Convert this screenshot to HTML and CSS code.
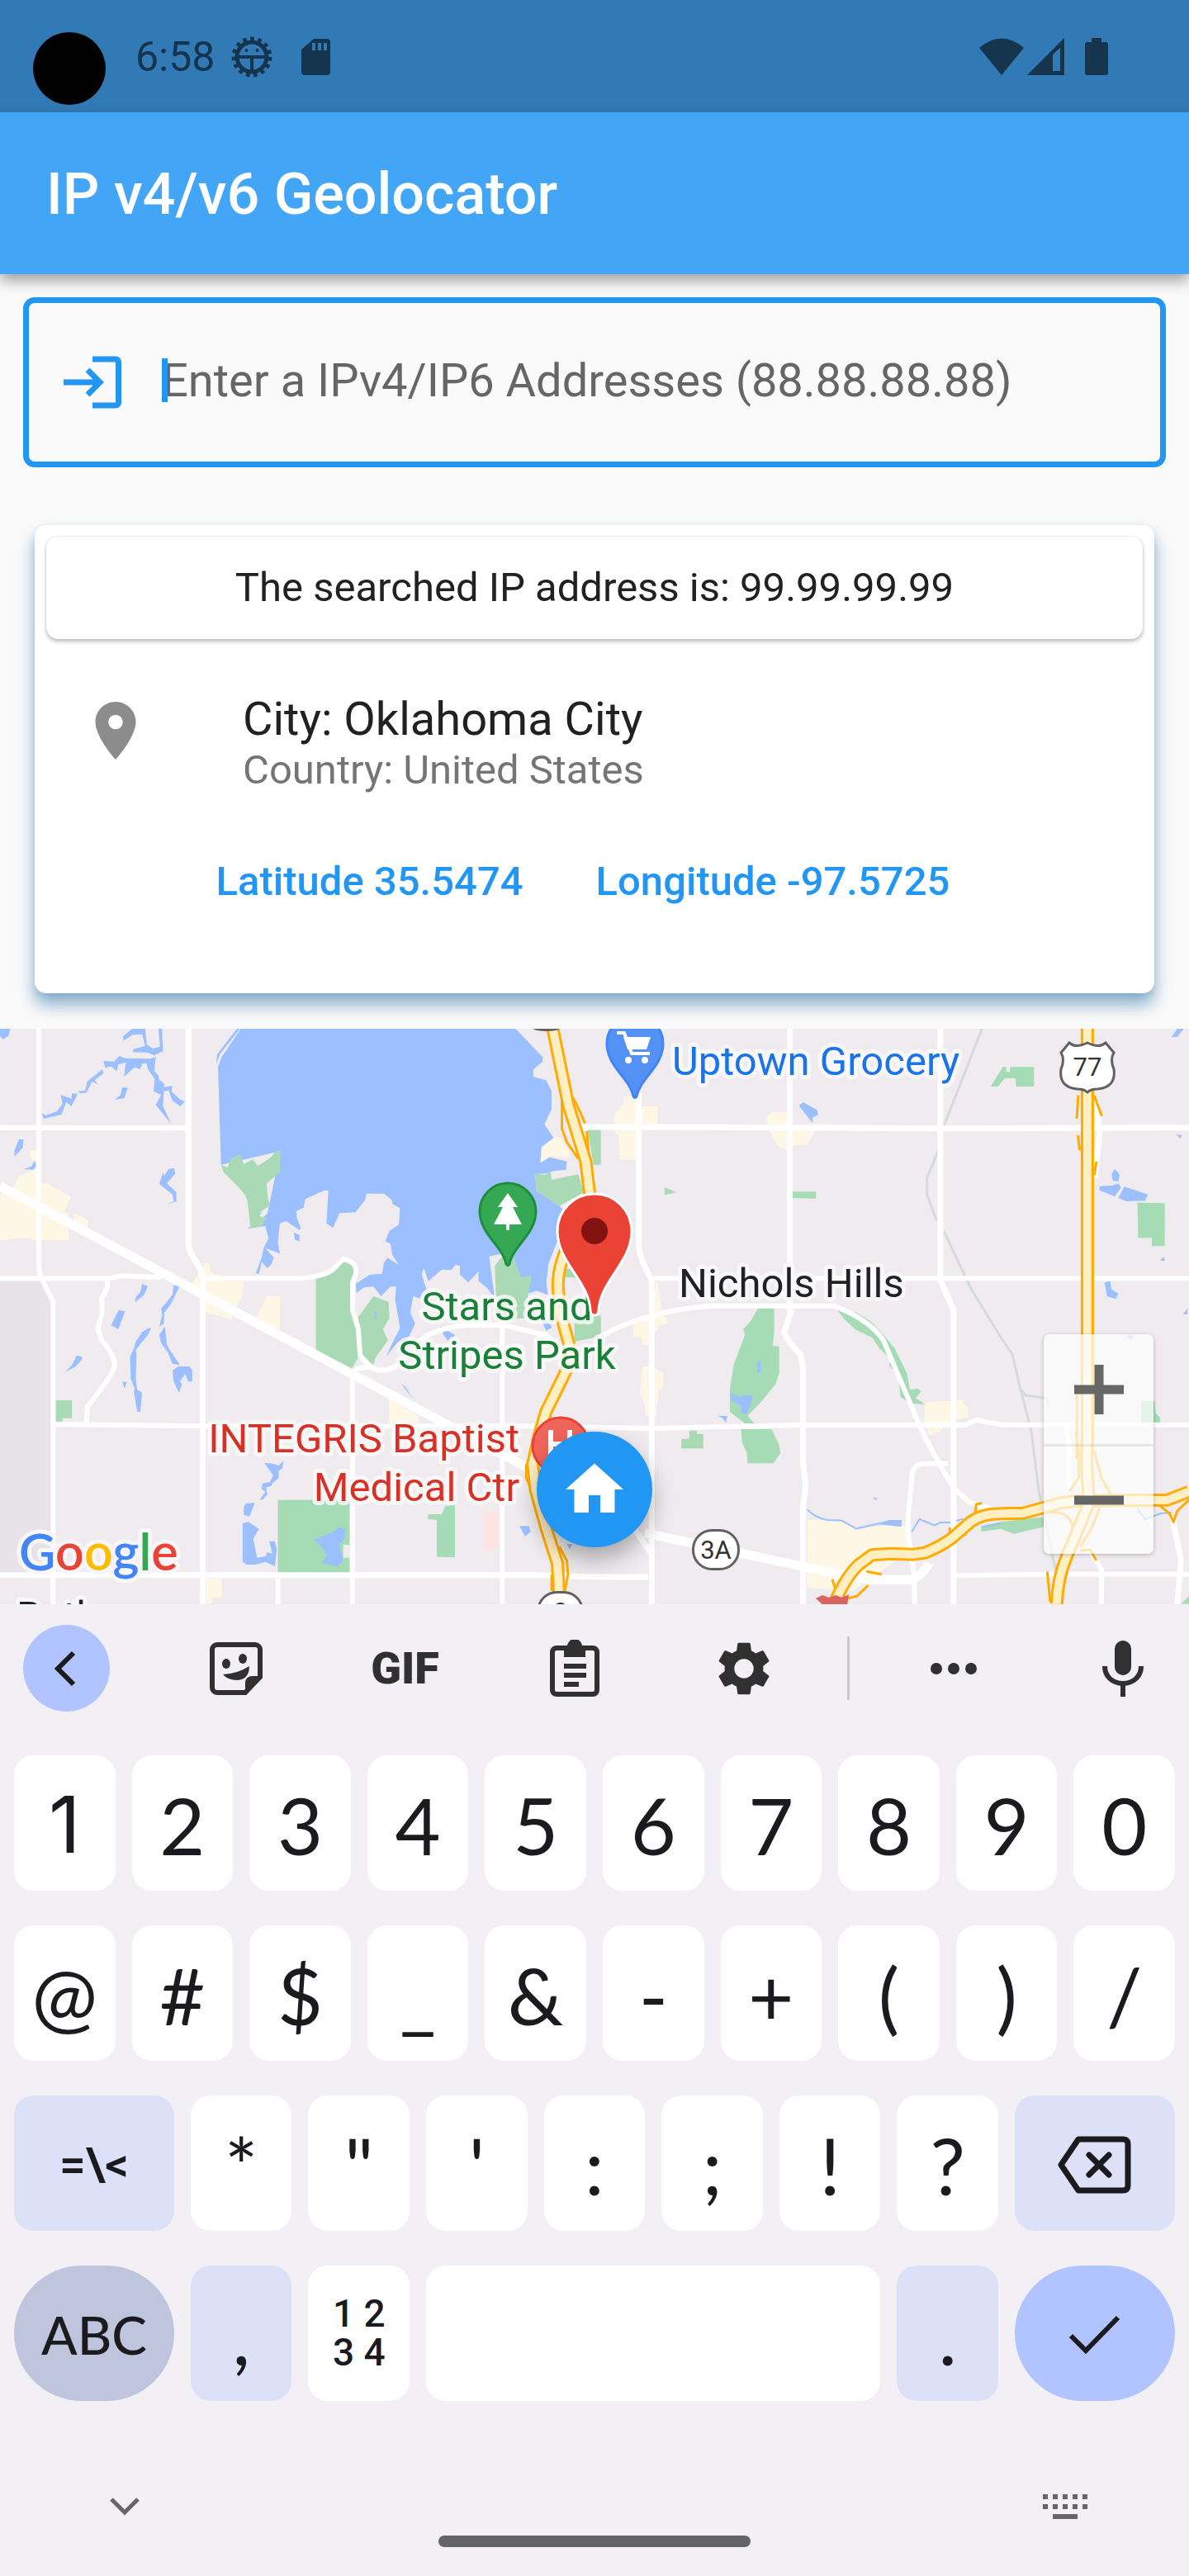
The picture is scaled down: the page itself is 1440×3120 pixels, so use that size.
FILE: index.html
```html
<!DOCTYPE html>
<html lang="en">
<head>
<meta charset="utf-8">
<meta name="viewport" content="width=device-width, initial-scale=1">
<title>IP v4/v6 Geolocator</title>
<link rel="stylesheet" href="styles.css">
</head>
<body>
<div class="screen">
  <div class="status">
    <span class="camera"></span>
    <div class="status-group">
      <span class="clock">6:58</span>
      <svg class="status-icon" viewBox="0 0 50 50" aria-hidden="true">
        <circle cx="25" cy="25" r="18" fill="none" stroke="currentColor" stroke-width="5"/>
        <circle cx="25" cy="25" r="22" fill="none" stroke="currentColor" stroke-width="5" stroke-dasharray="4.6 4.6"/>
        <path d="M7 25h36M25 25v18" stroke="currentColor" stroke-width="4"/>
        <circle cx="18.500" cy="17" r="2" fill="currentColor"/><circle cx="31.500" cy="17" r="2" fill="currentColor"/>
      </svg>
      <svg class="status-icon" viewBox="0 0 50 50" aria-hidden="true">
        <path fill="currentColor" fill-rule="evenodd" d="M20 3h16a4 4 0 0 1 4 4v36a4 4 0 0 1-4 4H9a4 4 0 0 1-4-4V16zM18 8v9h4V8zm7 0v9h4V8zm7 0v9h4V8z"/>
      </svg>
    </div>
    <div class="status-right">
      <svg width="54" height="50" viewBox="0 0 54 50" aria-hidden="true"><path fill="currentColor" d="M0 14Q27-9 54 14L27 47z"/></svg>
      <svg width="45" height="50" viewBox="0 0 45 50" aria-hidden="true"><path fill="currentColor" fill-rule="evenodd" d="M0 47L45 2v45zM31 22v20h9V14z"/></svg>
      <svg class="battery" width="28" height="50" viewBox="0 0 28 50" aria-hidden="true"><path fill="currentColor" d="M8 2h12v5h5a3 3 0 0 1 3 3v34a3 3 0 0 1-3 3H3a3 3 0 0 1-3-3V10a3 3 0 0 1 3-3h5z"/></svg>
    </div>
  </div>

  <header class="appbar"><h1>IP v4/v6 Geolocator</h1></header>

  <main>
    <label class="field">
      <svg class="icon" viewBox="0 0 24 24" aria-hidden="true"><path fill="currentColor" d="M11 7 9.600 8.400l2.600 2.600H2v2h10.200l-2.600 2.600L11 17l5-5-5-5zm9 12h-8v2h8c1.100 0 2-.9 2-2V5c0-1.100-.9-2-2-2h-8v2h8v14z"/></svg>
      <input type="text" placeholder="Enter a IPv4/IP6 Addresses (88.88.88.88)" aria-label="IP address">
      <span class="caret"></span>
    </label>

    <section class="card">
      <p class="searched">The searched IP address is: 99.99.99.99</p>
      <div class="place">
        <svg class="icon" viewBox="0 0 24 24" aria-hidden="true"><path fill="currentColor" d="M12 2C8.130 2 5 5.130 5 9c0 5.250 7 13 7 13s7-7.750 7-13c0-3.870-3.130-7-7-7zm0 9.500a2.500 2.500 0 0 1 0-5 2.500 2.500 0 0 1 0 5z"/></svg>
        <div>
          <p class="city">City: Oklahoma City</p>
          <p class="country">Country: United States</p>
        </div>
      </div>
      <div class="coords">
        <button type="button">Latitude 35.5474</button>
        <button type="button">Longitude -97.5725</button>
      </div>
    </section>

    <section class="map" aria-label="Map">
      <svg class="map-canvas" viewBox="0 0 1440 697" preserveAspectRatio="xMidYMid slice">
        <g transform="translate(0 -6) scale(.45918 .33333)">
          <path class="grey" d="M0 935H115L142 1010V2000H0z"/>
          <g class="beige">
            <path d="M0 640L3 600 30 605 50 555 80 535 100 528 103 580H125L187 630 170 685 182 690 180 787H82L80 778 25 780 22 787 0 785zM195 688L232 712V745L195 720zM80 460H100V500L85 495 78 480z"/>
            <path d="M540 870L550 868 560 910 590 915V935H642L640 985 625 1025 610 1075 585 1065 545 1050 508 940zM703 990H738V1112L672 1080zM543 2015H585V2085H560V2105H543zM1025 1362L1105 1425V1450H1025z"/>
            <path d="M1620 328L1645 290V262H1685V300H1735V365H1680L1676 495 1633 492 1632 410 1620 390zM2023 333L2040 320H2085V385L2150 390 2128 440H2095L2085 458 2055 450 2040 420 2023 375z"/>
            <path d="M1730 940H1735L1742 1000 1745 1060 1760 1070V1090L1740 1095 1710 1168 1695 1165 1690 1138 1670 1137V1075L1720 1060zM1695 1245H1715L1750 1265 1748 1325 1738 1330 1730 1425H1702L1700 1380 1688 1340zM2440 1375L2540 1368V1380L2552 1390V1430L2510 1440 2480 1480 2450 1495 2438 1440z"/>
            <path d="M2130 1802H2220L2255 1840 2290 1830 2370 1818 2395 1830V1920L2250 2060 2128 2050z"/>
          </g>
          <g class="water">
            <path d="M635 18H1360L1432 122 1430 140 1407 165V192L1440 205 1455 245V310L1436 365 1460 415 1428 447 1425 505 1450 485 1495 500 1493 530 1460 535 1435 545 1412 545 1414 605 1475 660 1500 700 1470 790 1447 870 1441 940 1445 985 1415 970 1385 985 1350 850 1335 832 1290 845 1305 1000 1285 960 1262 935V900L1235 940 1213 912V880L1202 875 1190 895 1165 893 1130 935 1118 888 1112 910 1125 965 1110 1000 1090 990 1082 1050 1095 1090 1070 1160 1050 1155 1018 1210 1035 1160 1055 1105 1042 1000 1045 955H1030L1005 990 985 955 960 958 940 978 938 945 975 912 1008 908 1012 870 1022 850 1052 877 1035 840 1030 800 1016 790 1027 752 1052 730 1055 670 1035 655 1033 640 1013 617H967L963 640 938 685 896 688 878 742 861 725 866 605 855 606 805 637 801 668 782 680 783 705 793 740 790 750 755 717 738 725 733 795 738 835 700 815 722 850 715 875 705 888 690 865 683 910 675 905 690 850 695 815 708 780 700 735 652 745 670 730 705 690 740 463 583 512 575 155 585 120z"/>
            <path d="M625 18H633L580 110 570 148 573 110zM110 325L120 333 150 318 165 290 160 258 188 272 190 253 205 255 188 300 175 285 162 330 115 345zM205 245L225 243 230 210 270 165 273 180 250 205 258 220 243 210 228 250 212 253z"/>
            <path d="M273 135L300 137 315 117 330 125 397 127 411 120 407 172 418 188 420 205 432 215 433 230 455 225 452 245 475 275 488 282 475 300 455 280 445 243 432 245 430 300 452 365 411 295 425 258 405 245 408 200 390 165 387 143 375 145 370 165 355 158 327 192 332 140 312 148 308 172 293 155 277 160z"/>
            <path d="M348 18H383L387 75 403 90 422 83 418 18H427L430 100 407 115 390 105 350 103 352 92 383 80 375 38 350 40 325 62V45zM322 232H337L328 270 303 275 318 258zM0 18H27L22 45 8 57 0 45zM50 420H62L60 450 38 482V460zM92 498L95 515 88 530 63 528 83 518zM445 527L460 525 462 545 440 580 465 612V645L438 658 458 645 455 620 420 582 430 540 433 552z"/>
            <path d="M375 945L390 955 380 985 357 1012V995L370 975zM458 950H475L450 1020 433 1050 432 1090 420 1100 428 1060 425 1035 455 985zM313 1040L330 1045 312 1110 293 1095zM395 1103L398 1108 390 1130 358 1185 360 1200 358 1290 362 1330 375 1340 370 1410H362L353 1335 355 1325 345 1290 343 1210 353 1180 358 1155 375 1120zM435 1100L440 1165 450 1190 475 1240 455 1235 443 1195 425 1160 420 1130zM455 1260L470 1245H500L507 1260V1300H497L488 1272 475 1300 480 1310 472 1340 458 1300zM202 1205L217 1210 215 1222 200 1245 172 1265 190 1240zM323 1300L335 1303 328 1325z"/>
            <path d="M697 1595L720 1598 735 1605 748 1588 745 1615 735 1625V1650L718 1670 715 1680 702 1685 705 1710 693 1728 685 1730 700 1700 690 1690 692 1670 712 1665 720 1640zM648 1743L672 1740 658 1790 643 1785V1755zM640 1815L655 1810 683 1835 668 1870 678 1940 700 1935 705 1920 718 1925 710 1880H725L730 1910 725 1970 700 1955 675 1965H650L640 1955zM1370 1825H1395L1400 1845 1385 1863zM1058 1307L1070 1320 1090 1363 1078 1343zM1495 1890H1510L1503 1910zM1160 1100L1200 1130 1185 1160 1170 1130zM1430 1080H1450L1455 1105 1440 1115z"/>
            <path d="M3105 18H3122L3105 48H3090zM2107 298L2118 285 2155 313 2158 332 2143 340V360zM2932 548L2940 527 2953 548 2950 573 2935 570zM2900 590L2935 587 2950 580 2957 595 2940 627 2900 605zM2965 592L3028 620 3020 643 2970 645 2950 632zM2913 940L2928 935 2932 965 2950 980 2943 1000 2920 990zM3060 860L3070 845 3072 862zM3103 402L3117 405 3113 418zM1893 1424L1918 1425 1915 1450 1905 1432zM2310 1817L2345 1803H2378V1828zM2303 1718L2315 1725 2308 1730zM3120 1055L3132 1035V1055zM2970 1135L2985 1130 2990 1140 2980 1148z"/>
          </g>
          <path class="land" d="M918 705L940 702 925 710zM995 660L1005 680 998 680zM1030 725L1042 710V725z"/>
          <path class="beige" d="M1425 505L1430 450 1465 410 1480 415 1500 460 1503 485H1475L1450 480z"/>
          <g class="green">
            <path d="M583 512L600 522 609 490 633 475 643 510 667 493 680 517 713 487 728 463H740L738 540 703 580 706 630 712 660 690 680 685 700 703 705 690 735 661 742 652 640 645 620 627 590 590 540zM1412 543L1435 550 1452 537 1455 567 1525 547 1540 612 1475 662 1450 640 1414 603z"/>
            <path d="M1305 880L1330 835H1350L1375 920 1400 915V940L1385 1040V1070H1310L1308 980zM833 925L880 900 908 860 935 885V935L930 1000 935 1050 945 1110 950 1200 925 1260 833 1185zM945 1065L985 990 1025 1010 1027 1070 1010 1110 1023 1150 990 1215 985 1240 965 1215 950 1210 948 1110zM147 1368H190V1433H165V1445H147zM1550 385H1585V512H1565zM1490 890H1540V922H1490zM1515 1060H1585V1135L1515 1155z"/>
            <path d="M1797 1510L1818 1507V1478H1838V1490H1855V1543H1797zM1753 595L1785 613 1753 622z"/>
          </g>
          <g class="green bright">
            <path d="M733 1730H922V1893H905V1940H922V1995H733zM1175 1752L1200 1748V1938L1152 1937V1802L1128 1800 1130 1782H1165zM2613 228L2645 157H2655L2653 175H2663L2665 157H2727V228H2680L2678 198H2650L2632 228zM2090 610H2152V635L2090 633zM3000 650L3072 652V808H3038V778H3002z"/>
            <path d="M2000 1033H2042V1120L2038 1170 2055 1172V1270L2045 1310 2010 1370 1972 1425 1990 1452H1965L1925 1410V1330L1935 1240 1965 1130 1960 1110 1980 1080zM1955 1473H2035L2055 1530 2058 1560 2040 1597H1972L1970 1560 1957 1520zM2205 1033L2260 1050 2295 1080 2330 1130 2360 1180 2392 1270 2400 1330 2420 1325 2430 1335 2415 1360 2440 1382 2400 1380 2375 1355 2370 1280 2345 1240 2350 1220 2320 1180 2300 1140 2255 1110 2225 1070zM2588 1825L2640 1810 2753 1792V1828L2673 1853 2640 1835 2588 1845zM3010 1370H3045L3048 1415 3060 1430V1450H3010zM3115 2108L3136 2080V2108z"/>
          </g>
          <path class="pink" d="M1275 1777H1315V1905H1275z"/>
          <path class="water" d="M828 1875L880 1845 895 1830 910 1835V1870L895 1890 905 1950 890 1972 850 1960 862 1930 845 1895zM775 758L790 768V790L778 785zM1925 1340L1950 1355 1965 1350H1987L1975 1400 1970 1418 1955 1415V1390L1930 1370zM1998 1230L2006 1220V1268L1998 1270zM988 1045L993 1042V1075L988 1070z"/>
          <path class="stream" d="M2130 1765Q2145 1790 2180 1803L2220 1805 2255 1832M2255 1835L2320 1815M2405 1845L2425 1800 2465 1822 2480 1812 2510 1812 2540 1798M2590 1830L2640 1815M3000 1760L3020 1800 3060 1780 3090 1775"/>
          <path class="rail" d="M2590 18L2490 370M2475 460L2445 560V620L2470 715M2490 755L2560 960 2640 1140 2670 1200 2690 1320 2720 1480 2740 1700 2785 1990M2690 1325L2705 1350 2760 1360 2765 1390"/>
          <g class="road">
            <path d="M102 18V870Q102 910 115 940L140 1010V2108M0 377L497 379M0 925H285L320 916 425 922M540 925H800Q860 915 880 890L905 855Q945 865 938 910L930 940V1040L945 1110 950 1205 975 1245M283 930V960L268 1000 270 1050 258 1105 268 1150Q302 1200 302 1240 302 1265 265 1330L230 1392 228 1455M135 1455L535 1462H1400L1720 1470 2100 1458H2545L2575 1440 2640 1457H3136M930 1275V2108M1325 1080V2108M733 2015V2108M935 1255L975 1245Q1000 1270 1040 1250L1110 1150Q1140 1110 1230 1095L1330 1095Q1400 1120 1440 1130L1480 1180"/>
            <path d="M1568 1150Q1680 1050 1868 1025H2198Q2290 1070 2330 1150L2395 1360Q2450 1550 2518 1690L2558 1740 2620 1765M1725 925H3136M2500 1598H2440Q2405 1600 2405 1650L2395 1790V1850L2412 2010V2108M2518 2005L2760 2000H3136M2812 1470L2820 1530V1700M2868 1900L2905 1980V2108"/>
          </g>
          <g class="road wide">
            <path d="M497 18V800C497 850 535 870 535 940V2108M1685 250V800Q1685 850 1719 930V2108M2083 18V1030L2085 1050 2068 1120Q2075 1150 2110 1200 2120 1240 2118 1280V1590L2125 1680 2118 1750V2108M2480 18V930L2515 1040V2108M1530 375L1910 376 2480 380 3136 377M0 2003H1410L1568 2010H1710M1670 1830L1720 1930M2893 280L2900 400 2888 560M3092 1790L3115 1950 3105 2108"/>
          </g>
          <path class="road trunk" d="M0 590L1395 1615M1700 1850L1760 1868 2250 2010 2300 2020H2400Q2430 2010 2450 1960"/>
          <g class="highway-edge">
            <path class="ramp" d="M1482 270V380L1495 430 1525 490M1512 270L1530 320 1543 362M1548 390L1552 470M1388 1600V1650L1410 1720M1475 1900L1495 1950 1498 2000 1490 2060M1455 2000V2060M2840 1345V1580M2838 1485L2845 1560 2845 1650 2820 1700M2885 1550L2905 1650 2930 1710M2770 1775Q2820 1770 2830 1830L2825 1860M2900 1760L2880 1830 2850 1900M2848 1915L2875 1910 2892 1950M2762 1990L2770 2100M2570 1800L2575 1745 2590 1742M2195 2018L2205 2060M2285 1990L2325 2000M2200 2100L2260 2080 2290 2040M2505 1830V1870L2480 1900M2545 1860L2555 1830M3045 1735L3085 1780 3095 1810 3105 1770 3136 1730M2844 260L2840 345M2886 260L2906 335M2843 405L2848 460M2892 500L2886 550"/>
            <path d="M1458 18L1485 200 1500 300 1545 500 1558 650 1550 760 1490 830Q1470 900 1472 960L1478 1050 1500 1160Q1505 1230 1490 1270L1440 1410 1425 1480 1405 1600 1412 1690 1440 1830 1470 1960 1475 2080"/>
            <path d="M2868 18V1500L2866 1600 2872 1740Q2840 1850 2815 1930 2790 2010 2787 2108M2200 2108Q2230 2010 2265 1965L2300 1930 2350 1925 2410 1928 2440 1922Q2480 1900 2510 1870L2560 1810Q2590 1780 2640 1780L2700 1778 2800 1740 2850 1733 3080 1730 3136 1700"/>
          </g>
          <g class="highway">
            <path d="M1458 18L1485 200 1500 300 1545 500 1558 650 1550 760 1490 830Q1470 900 1472 960L1478 1050 1500 1160Q1505 1230 1490 1270L1440 1410 1425 1480 1405 1600 1412 1690 1440 1830 1470 1960 1475 2080"/>
            <path d="M2868 18V1500L2866 1600 2872 1740Q2840 1850 2815 1930 2790 2010 2787 2108M2200 2108Q2230 2010 2265 1965L2300 1930 2350 1925 2410 1928 2440 1922Q2480 1900 2510 1870L2560 1810Q2590 1780 2640 1780L2700 1778 2800 1740 2850 1733 3080 1730 3136 1700"/>
          </g>
        </g>

        <path d="M536 690l8-4 8 3 8-3 8 3 8-4-2 14h-28z" transform="translate(452)" fill="#d9635e"/>
        <path d="M645 0h33q-4 3-16 3t-17-3z" fill="#616161"/>
        <g class="shield">
          <path d="M1295 17q8 7 22 0 14 7 22 0l10 12q-5 8 0 20 3 22-20 24-8 0-12 4-4-4-12-4-23-2-20-24 5-12 0-20z"/>
          <rect x="839.500" y="607.500" width="55" height="47" rx="23"/>
          <rect x="651.500" y="682.500" width="54" height="47" rx="23"/>
        </g>
        <g class="shield-text"><text x="1317" y="57">77</text><text x="867" y="642">3A</text><text x="679" y="717">3</text></g>

        <g stroke-width="3">
          <path fill="#5491f5" stroke="#4285f4" d="M735 18a34 34 0 0 1 68 0c0 28-28 42-32 64q-2 3-4 0c-4-22-32-36-32-64z"/>
          <path fill="#34a853" stroke="#1e8e3e" d="M581 221a34 34 0 0 1 68 0c0 28-28 42-32 64q-2 3-4 0c-4-22-32-36-32-64z"/>
          <circle fill="#f0655b" stroke="#ea4335" cx="679" cy="505" r="34"/>
        </g>
        <path fill="none" stroke="#fff" stroke-width="4" d="M747 5h9l9 25h22"/>
        <path fill="#fff" d="M755 10h33l-5 15h-23z"/><circle fill="#fff" cx="761" cy="38" r="4"/><circle fill="#fff" cx="781" cy="38" r="4"/>
        <path fill="#fff" d="M615 199l12 17h-6l11 21h-15v7h-4v-7h-15l11-21h-6z"/>
        <path stroke="#fff" stroke-width="6" d="M667 486v36M690 486v36M667 503h23"/>

        <g class="label">
          <text x="814" y="56" fill="#1a73e8">Uptown Grocery</text>
          <text x="822" y="325" fill="#202124">Nichols Hills</text>
          <text x="614" y="353" fill="#188038" text-anchor="middle">Stars and</text>
          <text x="614" y="412" fill="#188038" text-anchor="middle">Stripes Park</text>
          <text x="629" y="513" fill="#d93025" text-anchor="end">INTEGRIS Baptist</text>
          <text x="629" y="572" fill="#d93025" text-anchor="end">Medical Ctr</text>
          <text x="20" y="728" fill="#202124">Bethany</text>
        </g>
        <path fill="#ea4335" stroke="#fff" stroke-width="3" d="M675 245a45 45 0 0 1 90 0c0 38-38 60-40 96 0 8-10 8-10 0-2-36-40-58-40-96z"/>
        <circle cx="720" cy="245" r="16" fill="#811411"/>
        <text class="google" x="23" y="656"><tspan fill="#4285f4">G</tspan><tspan fill="#ea4335">o</tspan><tspan fill="#fbbc04">o</tspan><tspan fill="#4285f4">g</tspan><tspan fill="#34a853">l</tspan><tspan fill="#ea4335">e</tspan></text>
      </svg>
      <div class="zoom">
        <button type="button" aria-label="Zoom in"><svg width="60" height="60" viewBox="0 0 60 60"><path stroke="#666" stroke-width="11" d="M0 30h60M30 0v60"/></svg></button>
        <button type="button" aria-label="Zoom out"><svg width="60" height="60" viewBox="0 0 60 60"><path stroke="#666" stroke-width="11" d="M0 30h60"/></svg></button>
      </div>
      <button class="fab" type="button" aria-label="Home"><svg class="icon" viewBox="0 0 24 24"><path fill="#fff" d="M10 20v-6h4v6h5v-8h3L12 3 2 12h3v8z"/></svg></button>
    </section>
  </main>

  <footer class="keyboard">
    <div class="toolbar">
      <div class="tools">
        <button class="tool back" type="button" aria-label="Close toolbar"><svg width="84" height="84" viewBox="0 0 84 84"><path fill="none" stroke="currentColor" stroke-width="6" d="M50 23L31 42l19 19"/></svg></button>
        <button class="tool" type="button" aria-label="Stickers"><svg width="66" height="66" viewBox="0 0 66 66"><path fill="none" stroke="currentColor" stroke-width="6" d="M10 4h46a6 6 0 0 1 6 6v33L44 62H10a6 6 0 0 1-6-6V10a6 6 0 0 1 6-6z"/><path fill="currentColor" d="M62 42L44 62V50a8 8 0 0 1 8-8zM17 40q18-1 32-10 0 16-14 17-12 0-18-7z"/><ellipse cx="21" cy="27" rx="5" ry="6" fill="currentColor"/><ellipse cx="41" cy="21" rx="5" ry="6" fill="currentColor"/></svg></button>
        <button class="tool gif" type="button">GIF</button>
        <button class="tool" type="button" aria-label="Clipboard"><svg width="60" height="70" viewBox="0 0 60 70"><path fill="none" stroke="currentColor" stroke-width="6" d="M8 10h44a5 5 0 0 1 5 5v46a5 5 0 0 1-5 5H8a5 5 0 0 1-5-5V15a5 5 0 0 1 5-5z"/><path fill="currentColor" fill-rule="evenodd" d="M17 8h4a9 9 0 0 1 18 0h4v13H17zm13-1a3 3 0 0 0 0 6 3 3 0 0 0 0-6zM17 29h27v6H17zm0 11h27v6H17zm0 11h18v6H17z"/></svg></button>
        <button class="tool" type="button" aria-label="Settings"><svg width="78" height="78" viewBox="0 0 24 24"><path fill="currentColor" d="M19.140 12.940c.04-.3.06-.61.06-.94 0-.32-.02-.64-.07-.94l2.030-1.580a.49.49 0 0 0 .12-.61l-1.920-3.320a.49.49 0 0 0-.59-.22l-2.390.96c-.5-.38-1.030-.7-1.620-.94l-.36-2.540a.48.48 0 0 0-.48-.41h-3.840a.47.47 0 0 0-.47.41l-.36 2.540c-.59.24-1.130.57-1.620.94l-2.390-.96a.48.48 0 0 0-.59.22L2.740 8.870a.47.47 0 0 0 .12.61l2.030 1.580c-.05.3-.09.63-.09.94s.02.64.07.94l-2.030 1.580a.49.49 0 0 0-.12.61l1.920 3.320c.12.22.37.29.59.22l2.390-.96c.5.38 1.030.7 1.620.94l.36 2.540c.05.24.24.41.48.41h3.840c.24 0 .44-.17.47-.41l.36-2.540c.59-.24 1.130-.56 1.620-.94l2.390.96c.22.08.47 0 .59-.22l1.920-3.320a.47.47 0 0 0-.12-.61zM12 15.600A3.600 3.600 0 1 1 12 8.400a3.600 3.600 0 0 1 0 7.200z"/></svg></button>
      </div>
      <span class="divider"></span>
      <div class="tools">
        <button class="tool" type="button" aria-label="More"><svg width="56" height="14" viewBox="0 0 56 14"><g fill="currentColor"><circle cx="7" cy="7" r="7"/><circle cx="28" cy="7" r="7"/><circle cx="49" cy="7" r="7"/></g></svg></button>
        <button class="tool" type="button" aria-label="Voice input"><svg width="50" height="68" viewBox="0 0 50 68"><rect x="15" width="20" height="42" rx="10" fill="currentColor"/><path fill="none" stroke="currentColor" stroke-width="6" d="M3 31c0 13 10 21 22 21s22-8 22-21M25 52v16"/></svg></button>
      </div>
    </div>

    <div class="keys">
      <button class="key plain" type="button">1</button><button class="key" type="button">2</button><button class="key" type="button">3</button><button class="key" type="button">4</button><button class="key" type="button">5</button><button class="key" type="button">6</button><button class="key" type="button">7</button><button class="key" type="button">8</button><button class="key" type="button">9</button><button class="key" type="button">0</button>
      <button class="key" type="button">@</button><button class="key" type="button">#</button><button class="key" type="button">$</button><button class="key" type="button">_</button><button class="key" type="button">&amp;</button><button class="key" type="button">-</button><button class="key" type="button">+</button><button class="key" type="button">(</button><button class="key" type="button">)</button><button class="key" type="button">/</button>
      <button class="key side symbols" type="button">=\&lt;</button><button class="key" type="button">*</button><button class="key" type="button">"</button><button class="key" type="button">'</button><button class="key" type="button">:</button><button class="key" type="button">;</button><button class="key" type="button">!</button><button class="key" type="button">?</button>
      <button class="key side" type="button" aria-label="Backspace"><svg width="90" height="70" viewBox="0 0 90 70"><path fill="none" stroke="currentColor" stroke-width="7" stroke-linejoin="round" d="M25 4h54q6 0 6 6v50q0 6-6 6H25L4 35z"/><path stroke="currentColor" stroke-width="7" stroke-linecap="round" d="M38 23l24 24M62 23L38 47"/></svg></button>
      <button class="key side abc" type="button">ABC</button><button class="key soft" type="button">,</button><button class="key numbers" type="button">1 2<br>3 4</button><button class="key space" type="button" aria-label="Space"></button><button class="key soft" type="button">.</button>
      <button class="key side enter" type="button" aria-label="Done"><svg width="64" height="50" viewBox="0 0 64 50"><path fill="none" stroke="currentColor" stroke-width="6" d="M3 26l18 18L60 4"/></svg></button>
    </div>

    <div class="nav">
      <button class="nav-button" type="button" aria-label="Hide keyboard"><svg width="36" height="24" viewBox="0 0 36 24"><path fill="none" stroke="currentColor" stroke-width="5" d="M2 3l16 16L34 3"/></svg></button>
      <button class="nav-button" type="button" aria-label="Switch keyboard"><svg width="54" height="30" viewBox="0 0 54 30"><path fill="none" stroke="currentColor" stroke-width="6" stroke-dasharray="6 6" d="M0 3h54M0 15h54"/><path fill="currentColor" d="M12 24h30v6H12z"/></svg></button>
    </div>
    <div class="home-bar"></div>
  </footer>
</div>
</body>
</html>
```
FILE: styles.css
```css
* { box-sizing: border-box; }

body {
  margin: 0;
  background: #fafafa;
  color: #212121;
  font-family: Roboto, "Liberation Sans", sans-serif;
}

h1, p { margin: 0; }

button {
  padding: 0;
  border: 0;
  background: none;
  color: inherit;
  font: inherit;
}

svg { display: block; flex: none; }

.screen {
  display: flex;
  flex-direction: column;
  min-height: 100vh;
}

.icon { width: 84px; height: 84px; }

/* Status bar */
.status {
  position: relative;
  display: flex;
  justify-content: space-between;
  align-items: center;
  height: 136px;
  padding: 2px 98px 0 164px;
  background: #317ab6;
  color: #15344d;
}

.camera {
  position: absolute;
  left: 40px;
  top: 39px;
  width: 88px;
  height: 88px;
  border-radius: 50%;
  background: #000;
}

.status-group { display: flex; align-items: center; gap: 20px; }
.status-icon { width: 50px; height: 50px; }
.status-icon + .status-icon { margin-left: 10px; }
.clock { font-size: 50px; line-height: 60px; }
.status-right { display: flex; align-items: center; gap: 4px; }
.battery { margin-left: 21px; }

/* App bar */
.appbar {
  position: relative;
  display: flex;
  align-items: center;
  height: 196px;
  padding: 2px 56px 0;
  background: #42a5f5;
  box-shadow: 0 8px 16px rgba(0, 0, 0, .36);
}

.appbar h1 {
  color: #fff;
  font-size: 70px;
  font-weight: 500;
  line-height: 84px;
}

/* Address field */
.field {
  position: relative;
  display: flex;
  align-items: center;
  height: 206px;
  margin: 28px 28px 0;
  padding-left: 35px;
  border: 7px solid #2196f3;
  border-radius: 14px;
  color: #2196f3;
}

.field input {
  flex: 1;
  min-width: 0;
  margin-left: 42px;
  padding: 0 0 5px;
  border: 0;
  outline: 0;
  background: none;
  color: #212121;
  font: 56px/64px Roboto, "Liberation Sans", sans-serif;
}

.field input::placeholder { color: #666; opacity: 1; }

.caret {
  position: absolute;
  left: 161px;
  top: 67px;
  width: 7px;
  height: 53px;
  background: #2196f3;
}

/* Result card */
.card {
  margin: 70px 42px 43px;
  padding: 14px 14px 73px;
  border-radius: 14px;
  background: #fff;
  box-shadow: 0 14px 20px rgba(60, 125, 175, .6), 0 2px 8px rgba(60, 125, 175, .15);
}

.searched {
  padding: 32px 0;
  border-radius: 14px;
  box-shadow: 0 3px 5px rgba(0, 0, 0, .25), 0 0 2px rgba(0, 0, 0, .15);
  font-size: 49px;
  line-height: 60px;
  text-align: center;
}

.place {
  display: flex;
  gap: 112px;
  padding: 66px 42px 40px;
}

.place .icon { margin-top: 3px; color: #8c8c8c; }
.city { font-size: 56px; line-height: 62px; }
.country { color: #757575; font-size: 49px; line-height: 62px; }

.coords {
  display: flex;
  justify-content: center;
  gap: 32px;
  padding-right: 28px;
}

.coords button {
  height: 126px;
  padding: 0 28px;
  color: #2196f3;
  font-size: 49px;
  font-weight: 500;
}

/* Map */
.map {
  position: relative;
  height: 697px;
  overflow: hidden;
  background: #efebee;
}

.map-canvas { width: 100%; height: 100%; }
.map-canvas path { vector-effect: non-scaling-stroke; }
.grey { fill: #e7e3e6; }
.land { fill: #efebee; }
.beige { fill: #fff7e6; }
.water { fill: #9cc0ff; }
.green { fill: #aadab5; }
.bright { fill: #a5dbb5; }
.pink { fill: #ffe3e3; }
.stream { fill: none; stroke: #9cc0ff; stroke-width: 2px; }
.rail { fill: none; stroke: #d5dbdb; stroke-width: 3px; }
.road { fill: none; stroke: #fff; stroke-width: 6px; stroke-linejoin: round; }
.wide { stroke-width: 7px; }
.trunk { stroke-width: 11px; }
.highway-edge { fill: none; stroke: #ffab00; stroke-width: 16px; stroke-linejoin: round; }
.ramp { stroke-width: 3px; }
.highway { fill: none; stroke: #ffefc3; stroke-width: 10px; stroke-linejoin: round; }

.shield { fill: #fff; stroke: #616161; stroke-width: 3px; }
.shield-text { fill: #333; font-size: 31px; text-anchor: middle; }

.label {
  font-size: 49px;
  stroke: rgba(250, 250, 250, .8);
  stroke-width: 10px;
  stroke-linejoin: round;
  paint-order: stroke;
}

.google {
  font-family: Lato, sans-serif;
  font-size: 61px;
  font-weight: 600;
  stroke: #f8f6f8;
  stroke-width: 10px;
  stroke-linejoin: round;
  paint-order: stroke;
}

.zoom {
  position: absolute;
  right: 43px;
  top: 370px;
  display: flex;
  flex-direction: column;
  width: 133px;
  border-radius: 7px;
  background: rgba(255, 255, 255, .7);
  box-shadow: 0 1px 5px rgba(0, 0, 0, .25);
}

.zoom button {
  display: grid;
  place-items: center;
  height: 133px;
}

.zoom button + button { border-top: 3px solid rgba(0, 0, 0, .07); }

.fab {
  position: absolute;
  left: 50%;
  bottom: 69px;
  display: grid;
  place-items: center;
  width: 140px;
  height: 140px;
  margin-left: -70px;
  border-radius: 50%;
  background: #2196f3;
  box-shadow: 0 14px 28px rgba(0, 0, 0, .3);
}

/* Keyboard */
.keyboard {
  display: flex;
  flex: 1;
  flex-direction: column;
  background: #f2f0f5;
  color: #1b1b1f;
  font-family: Lato, "Open Sans", sans-serif;
}

.toolbar {
  display: flex;
  justify-content: space-between;
  align-items: center;
  padding: 25px 28px 53px;
}

.tools { display: flex; gap: 100px; }

.tool {
  display: grid;
  place-items: center;
  width: 105px;
  height: 105px;
  border-radius: 50%;
  color: #303030;
}

.back { background: #b1c4ff; color: #1b1b1f; }
.gif { font-family: Roboto, sans-serif; font-size: 54px; font-weight: 900; }
.divider { width: 3px; height: 77px; background: #c9c7cc; }

.keys {
  display: grid;
  grid-template-columns: repeat(20, minmax(0, 1fr));
  gap: 42px 20px;
  padding: 0 17px;
}

.key {
  display: flex;
  justify-content: center;
  align-items: center;
  grid-column: span 2;
  height: 164px;
  padding-top: 4px;
  border-radius: 24px;
  background: #fff;
  font-size: 95px;
  line-height: 100px;
}

.plain { font-family: Inter, sans-serif; }
.side { grid-column: span 3; background: #dde1f7; }
.soft { background: #dde1f7; }
.space { grid-column: span 8; }

.symbols { font-family: Roboto, sans-serif; font-size: 56px; font-weight: 600; }

.abc {
  border-radius: 82px;
  background: #c0c5de;
  font-size: 64px;
  font-weight: 500;
}

.numbers {
  padding-top: 0;
  font-family: Roboto, sans-serif;
  font-size: 46px;
  font-weight: 500;
  line-height: 47px;
}

.enter { border-radius: 82px; background: #b1c4ff; }

.nav {
  display: flex;
  justify-content: space-between;
  margin-top: auto;
  padding: 0 98px;
  color: #666;
}

.nav-button {
  display: grid;
  place-items: center;
  width: 105px;
  height: 60px;
}

.home-bar {
  align-self: center;
  width: 378px;
  height: 14px;
  margin: 5px 0 35px;
  border-radius: 7px;
  background: #636264;
}
```
